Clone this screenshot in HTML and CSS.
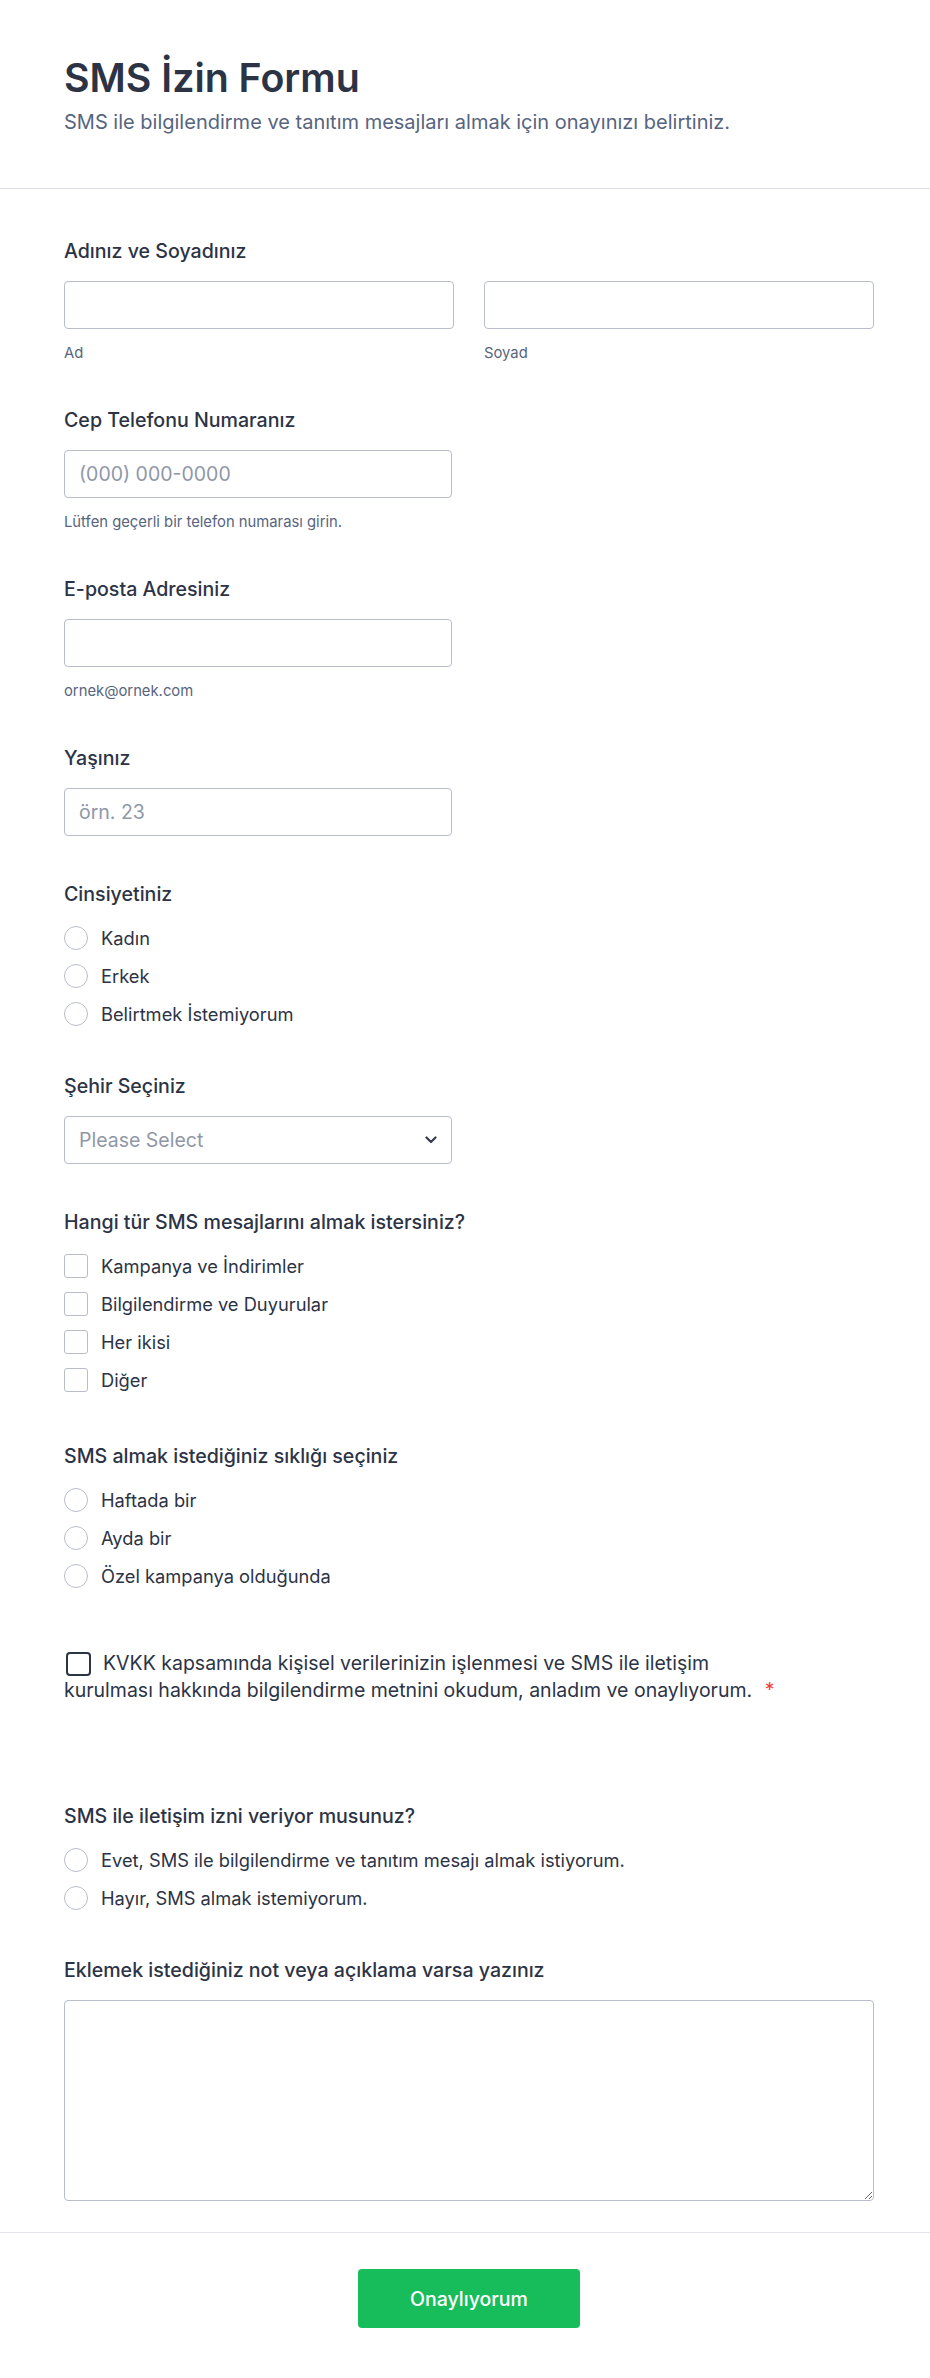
FILE: index.html
```html
<!DOCTYPE html>
<html lang="tr">
<head>
<meta charset="utf-8">
<title>SMS İzin Formu</title>
<link rel="stylesheet" href="styles.css">
</head>
<body>
<div class="form">
  <header class="form-header">
    <h1 class="form-title">SMS İzin Formu</h1>
    <p class="form-subtitle">SMS ile bilgilendirme ve tanıtım mesajları almak için onayınızı belirtiniz.</p>
  </header>

  <main class="form-body">
    <div class="field">
      <div class="field-label">Adınız ve Soyadınız</div>
      <div class="name-row">
        <div class="name-col">
          <input class="input" type="text">
          <div class="sublabel">Ad</div>
        </div>
        <div class="name-col">
          <input class="input" type="text">
          <div class="sublabel">Soyad</div>
        </div>
      </div>
    </div>

    <div class="field">
      <div class="field-label">Cep Telefonu Numaranız</div>
      <input class="input input-half" type="text" placeholder="(000) 000-0000">
      <div class="sublabel">Lütfen geçerli bir telefon numarası girin.</div>
    </div>

    <div class="field">
      <div class="field-label">E-posta Adresiniz</div>
      <input class="input input-half" type="text">
      <div class="sublabel">ornek@ornek.com</div>
    </div>

    <div class="field">
      <div class="field-label">Yaşınız</div>
      <input class="input input-half" type="text" placeholder="örn. 23">
    </div>

    <div class="field">
      <div class="field-label">Cinsiyetiniz</div>
      <div class="options">
        <div class="option"><span class="radio"></span><span class="option-text">Kadın</span></div>
        <div class="option"><span class="radio"></span><span class="option-text">Erkek</span></div>
        <div class="option"><span class="radio"></span><span class="option-text">Belirtmek İstemiyorum</span></div>
      </div>
    </div>

    <div class="field">
      <div class="field-label">Şehir Seçiniz</div>
      <div class="select input-half">
        <span class="select-placeholder">Please Select</span>
        <svg class="chevron" width="12" height="8" viewBox="0 0 12 8" aria-hidden="true"><polyline points="1.5,1.5 6,6 10.5,1.5" fill="none" stroke="#343c4e" stroke-width="2.2" stroke-linecap="round" stroke-linejoin="round"/></svg>
      </div>
    </div>

    <div class="field">
      <div class="field-label">Hangi tür SMS mesajlarını almak istersiniz?</div>
      <div class="options options-checks">
        <div class="option"><span class="checkbox"></span><span class="option-text">Kampanya ve İndirimler</span></div>
        <div class="option"><span class="checkbox"></span><span class="option-text">Bilgilendirme ve Duyurular</span></div>
        <div class="option"><span class="checkbox"></span><span class="option-text">Her ikisi</span></div>
        <div class="option"><span class="checkbox"></span><span class="option-text">Diğer</span></div>
      </div>
    </div>

    <div class="field">
      <div class="field-label">SMS almak istediğiniz sıklığı seçiniz</div>
      <div class="options">
        <div class="option"><span class="radio"></span><span class="option-text">Haftada bir</span></div>
        <div class="option"><span class="radio"></span><span class="option-text">Ayda bir</span></div>
        <div class="option"><span class="radio"></span><span class="option-text">Özel kampanya olduğunda</span></div>
      </div>
    </div>

    <div class="field field-consent">
      <p class="consent-text"><span class="consent-box"></span>KVKK kapsamında kişisel verilerinizin işlenmesi ve SMS ile iletişim<br>kurulması hakkında bilgilendirme metnini okudum, anladım ve onaylıyorum. <span class="required">*</span></p>
    </div>

    <div class="field">
      <div class="field-label">SMS ile iletişim izni veriyor musunuz?</div>
      <div class="options">
        <div class="option"><span class="radio"></span><span class="option-text">Evet, SMS ile bilgilendirme ve tanıtım mesajı almak istiyorum.</span></div>
        <div class="option"><span class="radio"></span><span class="option-text">Hayır, SMS almak istemiyorum.</span></div>
      </div>
    </div>

    <div class="field field-last">
      <div class="field-label">Eklemek istediğiniz not veya açıklama varsa yazınız</div>
      <textarea class="textarea"></textarea>
    </div>
  </main>

  <footer class="form-footer">
    <button class="submit" type="button">Onaylıyorum</button>
  </footer>
</div>
</body>
</html>
```
FILE: styles.css
```css
html, body {
  margin: 0;
  padding: 0;
  background: #ffffff;
}

body {
  font-family: Inter, "Noto Sans", sans-serif;
  color: #2c3345;
}

.form {
  width: 930px;
  background: #ffffff;
}

/* Header */
.form-header {
  padding: 54px 56px 52px 64px;
  border-bottom: 1px solid #dcdde6;
}

.form-title {
  margin: 0;
  font-size: 39.3px;
  line-height: 48px;
  font-weight: 600;
  color: #2c3345;
}

.form-subtitle {
  margin: 6px 0 0;
  font-size: 20px;
  line-height: 28px;
  font-weight: 400;
  color: #57647e;
}

/* Body */
.form-body {
  padding: 50px 56px 31px 64px;
}

.field {
  margin-bottom: 46px;
}

.field-last {
  margin-bottom: 0;
}

.field-label {
  font-size: 19.6px;
  line-height: 24px;
  font-weight: 500;
  color: #2c3345;
  margin-bottom: 18px;
}

.name-row {
  display: grid;
  grid-template-columns: 390px 390px;
  column-gap: 30px;
}

.input {
  display: block;
  box-sizing: border-box;
  width: 100%;
  height: 48px;
  margin: 0;
  padding: 0 14px;
  border: 1px solid #b8bdc9;
  border-radius: 4px;
  background: #ffffff;
  font-family: Inter, "Noto Sans", sans-serif;
  font-size: 19.5px;
  color: #2c3345;
  outline: none;
}

.input::placeholder {
  color: #8f97a8;
}

.input-half {
  width: 388px;
}

.sublabel {
  margin-top: 15px;
  font-size: 14.8px;
  line-height: 18px;
  color: #57647e;
}

/* Options */
.options {
  display: flex;
  flex-direction: column;
  gap: 10px;
}

.options-checks {
  padding-bottom: 4px;
}

.option {
  display: flex;
  align-items: center;
  gap: 13px;
  height: 28px;
}

.radio,
.checkbox {
  flex: none;
  box-sizing: border-box;
  width: 24px;
  height: 24px;
  border: 1px solid #b8bdc9;
  background: #ffffff;
}

.radio {
  border-radius: 50%;
}

.checkbox {
  border-radius: 3px;
}

.option-text {
  font-size: 18.3px;
  line-height: 24px;
  color: #2c3345;
}

/* Select */
.select {
  box-sizing: border-box;
  height: 48px;
  display: flex;
  align-items: center;
  justify-content: space-between;
  padding: 0 14px;
  border: 1px solid #b8bdc9;
  border-radius: 4px;
  background: #ffffff;
}

.select-placeholder {
  font-size: 19.5px;
  color: #8f97a8;
}

.chevron {
  display: block;
  flex: none;
}

/* Consent */
.field-consent {
  padding-top: 14px;
  padding-bottom: 54px;
}

.consent-text {
  margin: 0;
  font-size: 19.5px;
  line-height: 27px;
  color: #2c3345;
}

.consent-box {
  display: inline-block;
  box-sizing: border-box;
  width: 25px;
  height: 24px;
  margin: 2px 12px 0 2px;
  vertical-align: top;
  border: 2px solid #2c3345;
  border-radius: 4px;
}

.required {
  margin-left: 7px;
  color: #f23a3c;
}

/* Textarea */
.textarea {
  display: block;
  box-sizing: border-box;
  width: 100%;
  height: 201px;
  margin: 0;
  padding: 10px 14px;
  border: 1px solid #b8bdc9;
  border-radius: 4px;
  font-family: Inter, "Noto Sans", sans-serif;
  font-size: 19.5px;
  resize: vertical;
  outline: none;
}

/* Footer */
.form-footer {
  display: flex;
  justify-content: center;
  padding: 36px 56px 49px 64px;
  border-top: 1px solid #e3e4ea;
}

.submit {
  width: 222px;
  height: 59px;
  border: none;
  border-radius: 4px;
  background: #18bd5b;
  color: #ffffff;
  font-family: Inter, "Noto Sans", sans-serif;
  font-size: 19.5px;
  font-weight: 500;
  cursor: pointer;
}
```
